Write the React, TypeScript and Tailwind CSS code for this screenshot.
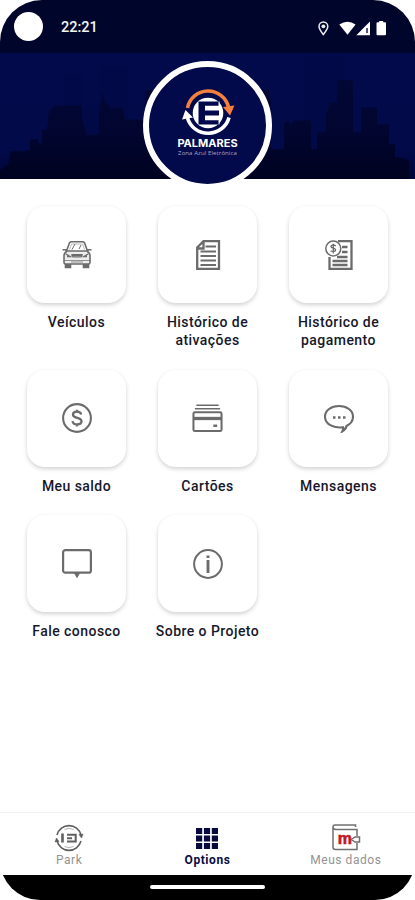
import React from "react";

const G = "#6b6b6b";

function Skyline() {
  return (
    <svg className="block h-full w-full" viewBox="0 53 415 127" preserveAspectRatio="none">
      <defs>
        <linearGradient id="sky" x1="0" y1="0" x2="0" y2="1">
          <stop offset="0" stopColor="#020a4b" />
          <stop offset="0.75" stopColor="#020a4a" />
          <stop offset="1" stopColor="#01053a" />
        </linearGradient>
        <linearGradient id="city" gradientUnits="userSpaceOnUse" x1="0" y1="80" x2="0" y2="180">
          <stop offset="0" stopColor="#020735" />
          <stop offset="0.55" stopColor="#01052f" />
          <stop offset="1" stopColor="#000220" />
        </linearGradient>
      </defs>
      <rect y="53" width="415" height="127" fill="url(#sky)" />
      <path d="M65 180V75h18v30h16V66h30v114zM303 180V55h42v125z" fill="#020840" opacity=".25" />
      <path
        fill="url(#city)"
        d="M0 180v-9l8-6 3-13h15v-1h4v-11h8v4h4v-14h5l2-18 5-6h28v13l5 17 12-1v-30h1l3-13 2 12 4 1v3h14l2 12h20V90h124v8h2v52h13v-26l3-3 4 4 3-4h17v29h6v-17h9v-18l4-12h7V80h16v53h8v-25h16v17h12v20h6v13h4l10 3v19z"
      />
    </svg>
  );
}

function Logo() {
  return (
    <svg className="h-[48px] w-[54px] shrink-0" viewBox="0 0 54 48" fill="none">
      <circle cx="27" cy="24" r="15.3" fill="#fff" />
      <path d="M17.500 12.500H38v4.300H24v4.700h14v5H24v4.700h14v4.300H17.500z" fill="#020a4b" />
      <path d="M38 12.500v4.300M38 31.200v4.300" stroke="#fff" strokeWidth="1" />
      <path d="M6.500 19A21 21 0 0 1 47.500 18" stroke="#f5803e" strokeWidth="3.600" />
      <path d="m42 18 11.500-1.500-4.500 10z" fill="#f5803e" />
      <path d="M48 28.500A21.500 21 0 0 1 6.500 29" stroke="#fff" strokeWidth="3.600" />
      <path d="m1 30.500 3.500-9.500 7.500 7.500z" fill="#fff" />
    </svg>
  );
}

function CarIcon() {
  return (
    <svg className="h-[30px] w-[30px]" viewBox="0 0 30 30" fill="none" stroke={G} strokeWidth="1.6">
      <path d="M4.500 11 7.500 2.800Q8 1.800 10 1.800h10q2 0 2.500 1l3 8.200M.5 9.800h3l1.500 1.500M29.500 9.800h-3L25 11.300" />
      <path d="M5 11q-3 2-3 5v6.500q0 1.500 1.500 1.500h23q1.500 0 1.500-1.500V16q0-3-3-5z" fill="#ececec" />
      <path d="M3.500 24v3.500h5V24M21.500 24v3.500h5V24" fill={G} />
      <path d="M9.500 14.500h11l-1 2.500h-9zM10 9.500 13 4M17 9l2-4" strokeWidth="1" />
      <path d="M10 15.800h10M4 14l4 2.500H5M26 14l-4 2.500h3" strokeWidth="1.400" />
      <path d="M2 20.500h26M9 22h12" strokeWidth="1" opacity=".7" />
      <path d="M7.500 9.500 9.500 4h11l2 5.500" strokeWidth=".8" opacity=".6" />
    </svg>
  );
}

function DocumentIcon() {
  return (
    <svg className="h-[30px] w-[30px]" viewBox="0 0 30 30" fill="none" stroke={G} strokeWidth="2.3">
      <path d="M4.200 7.500 10.500 1.200H26v27.600H4.200zM4.200 8.500h6.300V2" />
      <path d="M12.500 6.500H23M7.500 11.500H23M7.500 16H23M7.500 20.500H23M7.500 25H23" strokeWidth="2.100" />
    </svg>
  );
}

function PaymentIcon() {
  return (
    <svg className="h-[30px] w-[30px]" viewBox="0 0 30 30" fill="none" stroke={G} strokeWidth="2.3">
      <path d="M14 1.200h13.500v27.600h-22V17M8.500 25h15M8.500 21h15M13 17h10.500M18 12h5.500M18 7h5.500" />
      <circle cx="9.300" cy="8.500" r="7.500" fill="white" strokeWidth="1.500" />
      <path d="M11.800 6C9.300 4.200 6.800 5.200 7 6.700c.2 1.700 4.600 1.400 4.600 3.300 0 1.600-2.800 2-5 .8M9.300 3.700v9.700" strokeWidth="1.300" />
    </svg>
  );
}

function MoneyIcon() {
  return (
    <svg className="h-[30px] w-[30px]" viewBox="0 0 30 30" fill="none" stroke={G}>
      <circle cx="15" cy="15" r="13.900" strokeWidth="2.100" />
      <path d="M19.200 11.500c-.5-2-2-2.800-4.200-2.800-2.500 0-4 1.200-4 3 0 4.300 8.500 2 8.500 6.600 0 1.900-1.800 3.100-4.400 3.100-2.700 0-4.300-1.200-4.600-3.300M15 6.800v2.300m0 12v2.500" strokeWidth="2.300" />
    </svg>
  );
}

function CardsIcon() {
  return (
    <svg className="h-[30px] w-[31px]" viewBox="0 0 32 30" fill="none" stroke={G} strokeWidth="2.1">
      <path d="M4.500 1.800h23M3 5.400h26" strokeWidth="1.700" />
      <rect x="1.500" y="9" width="29" height="19.500" rx="1.500" />
      <path d="M1 15.500h30" strokeWidth="3.400" />
      <path d="M22 23h4" strokeWidth="2.500" />
    </svg>
  );
}

function MessageIcon() {
  return (
    <svg className="h-[30px] w-[30px]" viewBox="0 0 30 30" fill="none" stroke={G} strokeWidth="2.1">
      <path d="M15 3c7.800 0 14 4.500 14 10.700 0 4-2.500 7.300-6.500 9.300-.3 2-1.700 3.800-4.200 5.500.8-1.700 1.200-3 .7-4.300C9 25.700 1 20.900 1 13.700 1 7.500 7.200 3 15 3Z" />
      <path d="M9 14.500h2.500M14 14.500h2.500M19 14.500h2.500" strokeWidth="2.300" />
    </svg>
  );
}

function ContactIcon() {
  return (
    <svg className="h-[30px] w-[30px]" viewBox="0 0 30 30" fill="none" stroke={G} strokeWidth="2.200">
      <rect x="1.100" y="1.100" width="27.800" height="22.600" rx="2.300" />
      <path d="m12.500 24 2.500 4.500 2.500-4.500z" fill={G} strokeWidth="1" />
    </svg>
  );
}

function InfoIcon() {
  return (
    <svg className="h-[30px] w-[30px]" viewBox="0 0 30 30" fill="none" stroke={G}>
      <circle cx="15" cy="15" r="13.900" strokeWidth="2" />
      <path d="M15 6.500V9M15 11v13" strokeWidth="2.900" />
    </svg>
  );
}

const items: { icon: React.ReactNode; lines: string[] }[] = [
  { icon: <CarIcon />, lines: ["Veículos"] },
  { icon: <DocumentIcon />, lines: ["Histórico de", "ativações"] },
  { icon: <PaymentIcon />, lines: ["Histórico de", "pagamento"] },
  { icon: <MoneyIcon />, lines: ["Meu saldo"] },
  { icon: <CardsIcon />, lines: ["Cartões"] },
  { icon: <MessageIcon />, lines: ["Mensagens"] },
  { icon: <ContactIcon />, lines: ["Fale conosco"] },
  { icon: <InfoIcon />, lines: ["Sobre o Projeto"] },
];

function StatusIcons() {
  return (
    <svg className="h-[18px] w-[72px]" viewBox="0 0 72 18" fill="none">
      <path d="M6.300 15.500C3.500 12 2 10 2 7.500a4.400 4.400 0 0 1 8.800 0c0 2.500-1.700 4.500-4.500 8Z" stroke="#eee" strokeWidth="1.500" />
      <circle cx="6.400" cy="7.300" r="1.900" fill="#eee" />
      <path d="M22.300 5.500q8.200-5.500 16.300 0l-8.100 10.300z" fill="#fff" />
      <path d="M39.300 16.300 53 2.600v13.700z" fill="#fff" />
      <path d="M50 9v5" stroke="#07103a" strokeWidth="1.400" />
      <path d="M59.500 4.200q0-1 1-1h1.700V2h4v1.200H68q1 0 1 1v11q0 1-1 1h-7.500q-1 0-1-1z" fill="#fff" />
    </svg>
  );
}

function ParkIcon() {
  return (
    <svg className="h-[30px] w-[30px]" viewBox="0 0 30 30" fill="none" stroke="#5f5f5f" strokeWidth="1.600">
      <path d="M3 12A12.500 13 0 0 1 27 12M27 18A12.500 13 0 0 1 3 18" />
      <path d="m25 11.500 4-.5-1.500 4zM5 18.500l-4 .500 1.500-4z" fill="#5f5f5f" strokeWidth=".6" />
      <path d="M8.500 10.500v9" strokeWidth="2.600" />
      <path d="M13 11.800h8.700v6.700H13M13 15.200h5" strokeWidth="2" />
      <path d="M10.500 6.500q4.500-2.500 9 0M10.500 23.500q4.500 2.500 9 0" strokeWidth=".8" opacity=".6" />
    </svg>
  );
}

function WalletIcon() {
  return (
    <div className="relative h-[30px] w-[30px]">
      <svg className="h-[30px] w-[30px]" viewBox="0 0 30 30" fill="none" stroke="#707070" strokeWidth="1.500">
        <path d="M24.500 4V2H4Q2 2 2 4v20q0 2.500 2.500 2.500H26V20M26 13V6.500H5Q2 6.500 2 4" />
        <path d="M28.500 14h-4.500l-3.500 2.500L24 19h4.500z" fill="white" />
      </svg>
      <span className="absolute left-[7px] top-[6px] font-['Liberation_Sans',sans-serif] text-[16px] font-bold leading-[20px] text-[#c01823] [-webkit-text-stroke:0.6px_#c01823]">m</span>
    </div>
  );
}

export default function App() {
  return (
    <div className="h-[900px] w-[415px] overflow-hidden bg-white font-[Roboto,sans-serif]">
      <div className="flex h-[900px] flex-col overflow-hidden rounded-b-[40px] rounded-t-[42px] bg-white">
        <div className="flex h-[53px] shrink-0 items-center bg-[#00062b] pl-[14px] pr-[26px]">
          <span className="h-[29px] w-[29px] rounded-full bg-white" />
          <span className="ml-[18px] mt-[3px] text-[14.5px] font-medium text-[#f4f4f4]">22:21</span>
          <span className="ml-auto mt-[2px]"><StatusIcons /></span>
        </div>
        <header className="relative h-[126px] shrink-0">
          <Skyline />
          <div className="absolute left-[143px] top-[8px] flex h-[129px] w-[129px] flex-col items-center rounded-full border-[6px] border-white bg-[#020a4b] pt-[22px]">
            <Logo />
            <span className="whitespace-nowrap font-[Inter,sans-serif] text-[11px] font-bold leading-[12px] text-white">PALMARES</span>
            <span className="mt-[1px] whitespace-nowrap font-['Open_Sans',sans-serif] text-[6px] leading-[6px] tracking-[0.1px] text-[#a5a8c8]">Zona Azul Eletrônica</span>
          </div>
        </header>
        <main className="grid flex-1 grid-cols-[100px_100px_100px] content-start justify-center gap-x-[31px] pt-[27px]">
          {items.map((item, i) => (
            <div key={i} className={`flex flex-col items-center ${i < 3 ? "h-[163.5px]" : "h-[145.5px]"}`}>
              <div className="flex h-[97px] w-[99px] shrink-0 items-center justify-center rounded-[18px] bg-white shadow-[0_2px_4px_rgba(0,0,0,0.18)]">
                {item.icon}
              </div>
              <div className="mt-[10px] whitespace-nowrap text-center text-[14px] font-medium leading-[18px] tracking-[0.45px] text-[#16182b]">
                {item.lines.map((line) => <div key={line}>{line}</div>)}
              </div>
            </div>
          ))}
        </main>
        <nav className="grid h-[63px] shrink-0 grid-cols-3 border-t border-[#f3f3f3] bg-white text-center text-[12px] leading-[14px] tracking-[0.55px] text-[#939393]">
          <div className="flex flex-col items-center pt-[10px]"><ParkIcon />Park</div>
          <div className="flex flex-col items-center pt-[10px] font-bold text-[#0a0d42]">
            <svg className="h-[30px] w-[22px]" viewBox="0 0 22 30" fill="#07093f">
              <path d="M0 5h6.200v6H0zM7.900 5h6.200v6H7.900zM15.800 5H22v6h-6.200zM0 12.500h6.200v6H0zM7.900 12.500h6.200v6H7.900zM15.800 12.500H22v6h-6.200zM0 20h6.200v6H0zM7.900 20h6.200v6H7.900zM15.800 20H22v6h-6.200z" />
            </svg>
            Options
          </div>
          <div className="flex flex-col items-center pt-[10px]"><WalletIcon />Meus dados</div>
        </nav>
        <footer className="flex h-[25px] shrink-0 justify-center bg-black pt-[10px]">
          <div className="h-[4px] w-[115px] rounded-full bg-white" />
        </footer>
      </div>
    </div>
  );
}
